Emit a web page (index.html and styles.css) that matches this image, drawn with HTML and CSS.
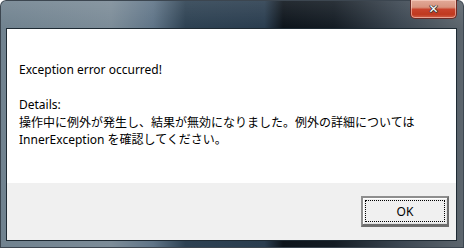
FILE: index.html
```html
<!DOCTYPE html>
<html lang="ja">
<head>
<meta charset="utf-8">
<title>Exception</title>
<link rel="stylesheet" href="styles.css">
</head>
<body>
<div class="window">
  <div class="titlebar">
    <div class="close"><span class="x">✕</span></div>
  </div>
  <div class="client">
    <div class="content">
      <p class="msg">Exception error occurred!</p>
      <p class="msg gap">Details:<br>操作中に例外が発生し、結果が無効になりました。例外の詳細については<br>InnerException を確認してください。</p>
    </div>
    <div class="footer">
      <button class="ok" type="button"><span class="focus">OK</span></button>
    </div>
  </div>
</div>
</body>
</html>
```
FILE: styles.css
```css
html, body {
  margin: 0;
  padding: 0;
}
body {
  width: 464px;
  height: 248px;
  overflow: hidden;
  font-family: "Noto Sans", "Noto Sans CJK JP", sans-serif;
}
.window {
  box-sizing: border-box;
  width: 464px;
  height: 248px;
  padding: 0 7px 7px 6px;
  display: flex;
  flex-direction: column;
  border-radius: 6px 6px 0 0;
  background:
    linear-gradient(180deg, rgba(255,255,255,0.10) 0, rgba(255,255,255,0) 28px),
    linear-gradient(90deg, #70828f 0, #7c8c98 24%, #5f7487 33%, #2d4152 40%, #2a3d4f 57%, #0d141b 61%, #141c24 72%, #3a4550 86%, #5d666e 100%);
  box-shadow: inset 0 0 0 1px #3c4650;
}
.titlebar {
  height: 28px;
  flex: none;
  display: flex;
  justify-content: flex-end;
  align-items: flex-start;
  box-sizing: border-box;
}
.close {
  width: 47px;
  height: 19px;
  box-sizing: border-box;
  border: 1px solid #6b2a25;
  border-top: none;
  border-radius: 0 0 5px 5px;
  background: linear-gradient(180deg, #e2aa98 0, #d8947f 40%, #c8432c 52%, #c0391f 80%, #d0614a 100%);
  box-shadow: inset 0 0 0 1px rgba(255,220,210,0.55);
  display: flex;
  justify-content: center;
  align-items: center;
}
.x {
  color: #ffffff;
  font-family: "DejaVu Sans", sans-serif;
  font-weight: bold;
  font-size: 12px;
  line-height: 1;
  text-shadow: 0 0 1px #2a2a2a, 1px 0 0 #3a3a3a, -1px 0 0 #3a3a3a, 0 1px 0 #3a3a3a;
}
.client {
  flex: 1;
  display: flex;
  flex-direction: column;
  border: 1px solid #1e2a33;
  background: #ffffff;
}
.content {
  flex: 1;
  background: #ffffff;
  padding: 32px 11px 0 12px;
}
.msg {
  margin: 0;
  font-size: 12px;
  line-height: 17.6px;
  color: #000000;
}
.gap {
  margin-top: 17.6px;
}
.footer {
  height: 57px;
  flex: none;
  background: #f0f0f0;
  display: flex;
  justify-content: flex-end;
  align-items: flex-start;
  padding: 13px 7px 0 0;
  box-sizing: border-box;
}
.ok {
  width: 88px;
  height: 31px;
  box-sizing: border-box;
  padding: 2px;
  margin: 0;
  border: 2px solid #8e8e8e;
  border-right-color: #6f6f6f;
  border-bottom-color: #6f6f6f;
  border-bottom-width: 3px;
  background: #f0f0f0;
  box-shadow: inset 1px 1px 0 #ffffff, inset -1px -1px 0 #e3e3e3;
  display: flex;
  font-family: "Noto Sans", sans-serif;
  font-size: 12px;
  color: #000000;
}
.focus {
  flex: 1;
  border: 1px dotted #000000;
  display: flex;
  justify-content: center;
  align-items: center;
}
```
